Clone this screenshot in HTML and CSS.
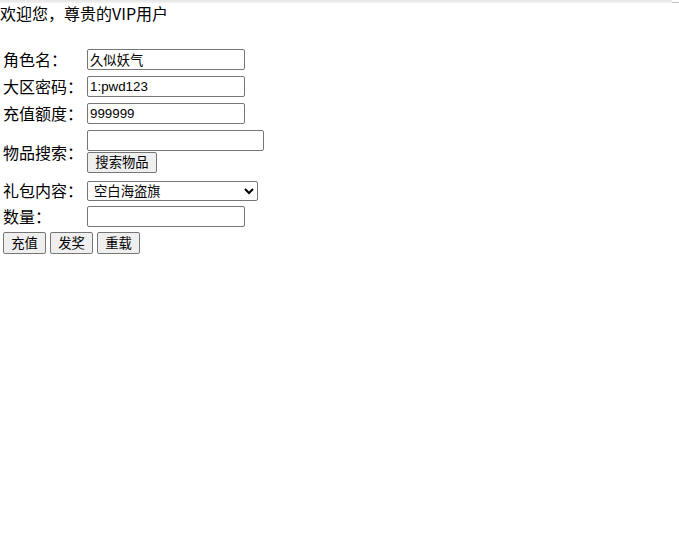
FILE: index.html
```html
<!DOCTYPE html>
<html lang="zh-CN">
<head>
<meta charset="utf-8">
<title>VIP</title>
<link rel="stylesheet" href="styles.css">
</head>
<body>
<div class="topbar"><div class="topbar-main"></div><div class="topbar-end"></div></div>
<div class="welcome">欢迎您，尊贵的VIP用户</div>
<div class="spacer"></div>
<table class="form">
  <tr>
    <td class="label">角色名：</td>
    <td><div class="cell"><input class="field" type="text" value="久似妖气"></div></td>
  </tr>
  <tr>
    <td class="label">大区密码：</td>
    <td><div class="cell"><input class="field" type="text" value="1:pwd123"></div></td>
  </tr>
  <tr>
    <td class="label">充值额度：</td>
    <td><div class="cell"><input class="field" type="text" value="999999"></div></td>
  </tr>
  <tr>
    <td class="label">物品搜索：</td>
    <td>
      <div class="search">
        <input class="field field-search" type="text" value="">
        <button class="btn btn-search" type="button">搜索物品</button>
      </div>
    </td>
  </tr>
  <tr>
    <td class="label">礼包内容：</td>
    <td>
      <div class="select-cell">
        <select class="pick">
          <option>空白海盗旗</option>
        </select>
      </div>
    </td>
  </tr>
  <tr>
    <td class="label">数量：</td>
    <td><div class="cell"><input class="field" type="text" value=""></div></td>
  </tr>
  <tr>
    <td colspan="2">
      <div class="actions">
        <button class="btn btn-act" type="button">充值</button>
        <button class="btn btn-act" type="button">发奖</button>
        <button class="btn btn-act" type="button">重载</button>
      </div>
    </td>
  </tr>
</table>
</body>
</html>
```
FILE: styles.css
```css
html, body {
  margin: 0;
  padding: 0;
  background: #ffffff;
}
body {
  font-family: "Noto Sans CJK SC", "Noto Sans", sans-serif;
  font-size: 16px;
  color: #000000;
}
.topbar {
  display: flex;
  height: 3px;
}
.topbar-main {
  flex: 1;
  background: linear-gradient(#e4e4e4, #f3f3f3);
}
.topbar-end {
  width: 7px;
  box-sizing: border-box;
  border-bottom: 1px solid #c4c4c4;
}
.welcome {
  height: 21px;
  line-height: 21px;
  white-space: nowrap;
}
.spacer {
  height: 21px;
}
.form {
  border-collapse: separate;
  border-spacing: 2px;
}
.form td {
  padding: 1px;
  vertical-align: middle;
}
.label {
  line-height: 21px;
  white-space: nowrap;
}
.cell {
  height: 23px;
  display: flex;
  align-items: center;
}
.field {
  display: block;
  box-sizing: border-box;
  width: 158px;
  height: 21px;
  margin: 0;
  padding: 1px 2px;
  border: 1px solid #767676;
  border-radius: 2px;
  background: #ffffff;
  font-family: "Liberation Sans", "Noto Sans CJK SC", sans-serif;
  font-size: 13.33px;
  color: #000000;
}
.field-search {
  width: 177px;
}
.search {
  display: flex;
  flex-direction: column;
  align-items: flex-start;
  padding: 1px 0 3px;
  gap: 1px;
}
.btn {
  box-sizing: border-box;
  height: 21px;
  margin: 0;
  padding: 0 6px;
  border: 1px solid #767676;
  border-radius: 2px;
  background: #efefef;
  font-family: "Liberation Sans", "Noto Sans CJK SC", sans-serif;
  font-size: 13.33px;
  line-height: 17px;
  color: #000000;
}
.btn-search {
  width: 70px;
}
.select-cell {
  box-sizing: border-box;
  height: 21px;
  padding-top: 1px;
}
.pick {
  display: block;
  box-sizing: border-box;
  width: 171px;
  height: 20px;
  margin: 0;
  padding: 0 0 0 2px;
  border: 1px solid #767676;
  border-radius: 2px;
  background: #ffffff;
  font-family: "Liberation Sans", "Noto Sans CJK SC", sans-serif;
  font-size: 13.33px;
  color: #000000;
}
.actions {
  display: flex;
  gap: 4px;
}
.btn-act {
  width: 43px;
  height: 22px;
  padding: 0;
}
```
